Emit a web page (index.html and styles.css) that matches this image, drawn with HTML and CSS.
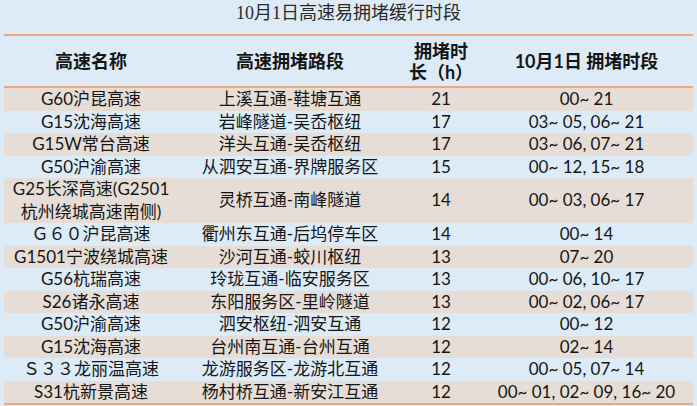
FILE: index.html
```html
<!DOCTYPE html>
<html lang="zh-CN">
<head>
<meta charset="utf-8">
<title>10月1日高速易拥堵缓行时段</title>
<link rel="stylesheet" href="styles.css">
</head>
<body>
<div class="page">
  <div class="title">10月1日高速易拥堵缓行时段</div>
  <table class="tbl">
    <colgroup>
      <col class="c1"><col class="c2"><col class="c3"><col class="c4">
    </colgroup>
    <thead>
      <tr>
        <th>高速名称</th>
        <th>高速拥堵路段</th>
        <th class="two">拥堵时<br>长（h）</th>
        <th>10月1日 拥堵时段</th>
      </tr>
    </thead>
    <tbody>
      <tr><td>G60沪昆高速</td><td>上溪互通-鞋塘互通</td><td>21</td><td>00~ 21</td></tr>
      <tr><td>G15沈海高速</td><td>岩峰隧道-吴岙枢纽</td><td>17</td><td>03~ 05, 06~ 21</td></tr>
      <tr><td>G15W常台高速</td><td>洋头互通-吴岙枢纽</td><td>17</td><td>03~ 06, 07~ 21</td></tr>
      <tr><td>G50沪渝高速</td><td>从泗安互通-界牌服务区</td><td>15</td><td>00~ 12, 15~ 18</td></tr>
      <tr><td>G25长深高速(G2501<br>杭州绕城高速南侧)</td><td>灵桥互通-南峰隧道</td><td>14</td><td>00~ 03, 06~ 17</td></tr>
      <tr><td>Ｇ６０沪昆高速</td><td>衢州东互通-后坞停车区</td><td>14</td><td>00~ 14</td></tr>
      <tr><td>G1501宁波绕城高速</td><td>沙河互通-蛟川枢纽</td><td>13</td><td>07~ 20</td></tr>
      <tr><td>G56杭瑞高速</td><td>玲珑互通-临安服务区</td><td>13</td><td>00~ 06, 10~ 17</td></tr>
      <tr><td>S26诸永高速</td><td>东阳服务区-里岭隧道</td><td>13</td><td>00~ 02, 06~ 17</td></tr>
      <tr><td>G50沪渝高速</td><td>泗安枢纽-泗安互通</td><td>12</td><td>00~ 12</td></tr>
      <tr><td>G15沈海高速</td><td>台州南互通-台州互通</td><td>12</td><td>02~ 14</td></tr>
      <tr><td>Ｓ３３龙丽温高速</td><td>龙游服务区-龙游北互通</td><td>12</td><td>00~ 05, 07~ 14</td></tr>
      <tr><td>S31杭新景高速</td><td>杨村桥互通-新安江互通</td><td>12</td><td>00~ 01, 02~ 09, 16~ 20</td></tr>
    </tbody>
  </table>
</div>
</body>
</html>
```

FILE: styles.css
```css
html, body {
  margin: 0;
  padding: 0;
  background: #ddebf7;
}
.page {
  width: 697px;
  height: 406px;
  overflow: hidden;
  padding: 0 4px;
  box-sizing: border-box;
}
.title {
  height: 34px;
  line-height: 27px;
  text-align: center;
  font-family: "Liberation Serif", "Noto Sans CJK SC", serif;
  font-size: 18px;
  color: #2a2a2a;
}
.tbl {
  width: 689px;
  border-collapse: collapse;
  table-layout: fixed;
  font-family: Lato, "Noto Sans CJK SC", sans-serif;
  color: #161616;
}
.c1 { width: 174px; }
.c2 { width: 224px; }
.c3 { width: 78px; }
.c4 { width: 213px; }
.tbl thead tr {
  border-top: 2px solid #eda77c;
  border-bottom: 2px solid #eda77c;
}
.tbl th {
  height: 48px;
  padding: 0;
  font-size: 18px;
  font-weight: bold;
  text-align: center;
  vertical-align: middle;
  line-height: 22px;
}
.tbl th.two {
  line-height: 21px;
  padding-top: 2px;
}
.tbl td {
  padding: 0;
  height: 22.5px;
  line-height: 22.5px;
  font-size: 17px;
  text-align: center;
  vertical-align: middle;
  white-space: nowrap;
}
.tbl tbody tr:nth-child(odd) {
  background: #e5ddd6;
}
.tbl tbody tr:nth-child(even) {
  background: #ddebf7;
}
.tbl tbody tr:last-child {
  border-bottom: 2px solid #eda77c;
}
```
